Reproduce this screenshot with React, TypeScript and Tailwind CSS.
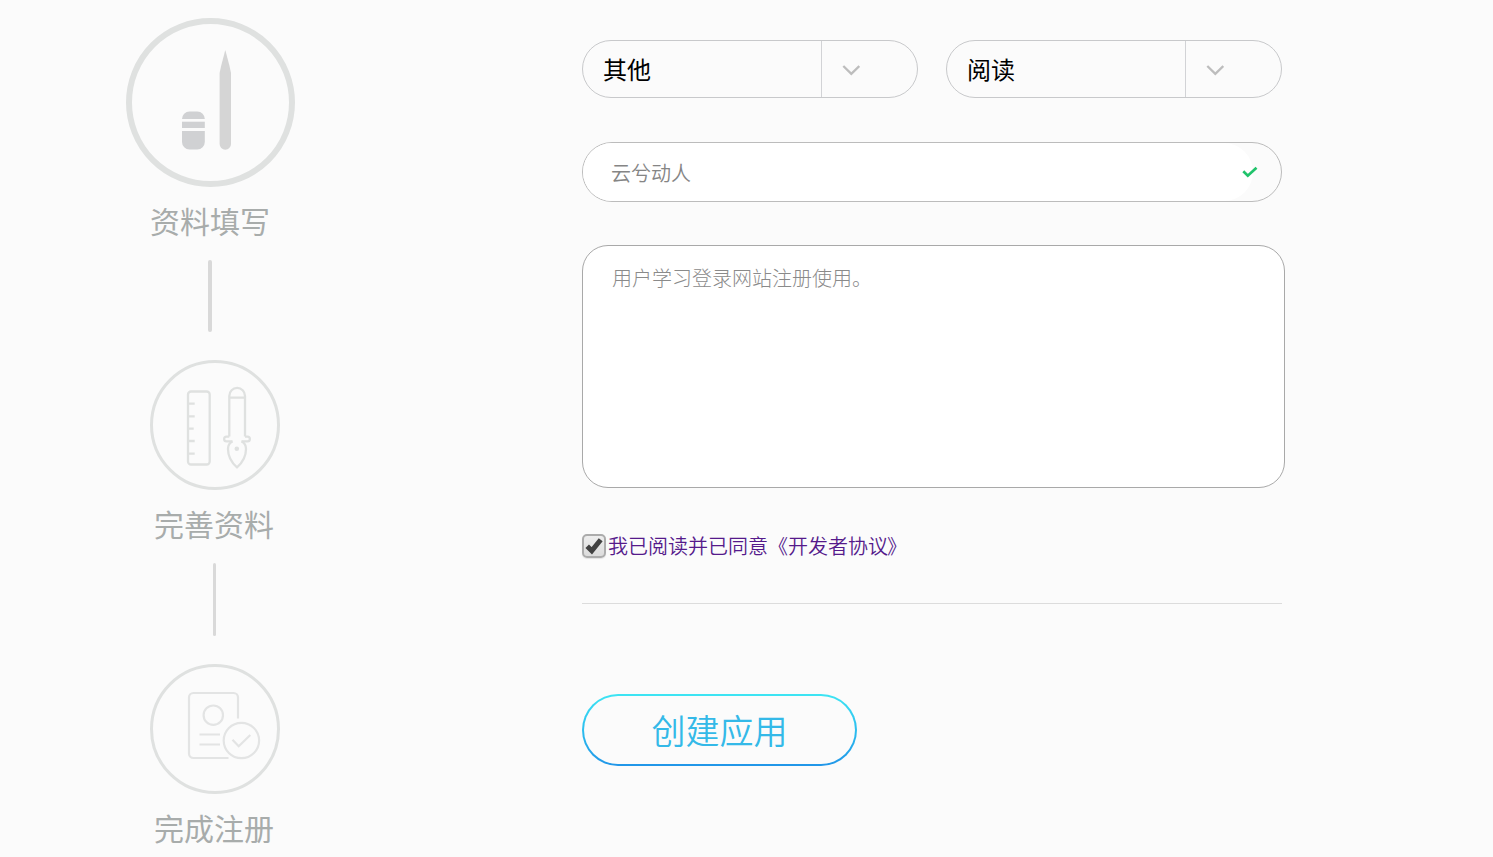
import React, { useState } from "react";

interface StepProps {
  label: string;
  className: string;
  labelClassName: string;
  children: React.ReactNode;
}

function Step({ label, className, labelClassName, children }: StepProps) {
  return (
    <div className={className}>
      {children}
      <div className={`h-10 text-[30px] leading-10 font-normal whitespace-nowrap text-[#a8acab] ${labelClassName}`}>{label}</div>
    </div>
  );
}

function PencilIcon() {
  return (
    <svg width="169" height="169" viewBox="0 0 169 169" fill="none">
      <circle cx="84.5" cy="84.5" r="81.5" stroke="#dfe1e0" strokeWidth="6" />
      <path d="M56 101V101a7.500 7.500 0 0 1 7.500-7.500h7.800a7.500 7.500 0 0 1 7.500 7.500v0z" fill="#d0d1d3" />
      <path d="M56 103.700h22.800v6.300H56z" fill="#d0d1d3" />
      <path d="M56 113h22.800v11a7.500 7.500 0 0 1-7.500 7.500H63.500a7.500 7.500 0 0 1-7.500-7.500z" fill="#d0d1d3" />
      <path d="M99.300 32L103.500 48L105 55V126a5.700 5.700 0 0 1-11.400 0V55L95.100 48z" fill="#d5d5d5" />
    </svg>
  );
}

function RulerPenIcon() {
  return (
    <svg width="130" height="130" viewBox="0 0 130 130" fill="none" stroke="#dfe1e0" strokeWidth="2.300">
      <circle cx="65" cy="65" r="63.500" strokeWidth="3" />
      <rect x="38" y="31.500" width="21.700" height="73" rx="3" />
      <path d="M38 43.700h6.700M38 56.300h6.700M38 68.700h5.700M38 81h6.700M38 93.700h6.700" />
      <path d="M79.300 76.500V36a7.800 8 0 0 1 15.700 0V76.500M79.300 37.700H95" />
      <path d="M79.300 76.700H76.500a2.300 2.300 0 0 0 0 4.700H82.500M95 76.700h2.500a2.300 2.300 0 0 1 0 4.700H91.500" />
      <path d="M82.500 81.500C79 83 78 86 78 89C78 96 82 103 87 107.300C92 103 96 96 96 89C96 86 95 83 91.500 81.500" />
      <circle cx="86.800" cy="88.700" r="2.300" fill="#dfe1e0" stroke="none" />
    </svg>
  );
}

function DoneIcon() {
  return (
    <svg width="130" height="130" viewBox="0 0 130 130" fill="none" stroke="#e3e4e4" strokeWidth="2.200">
      <circle cx="65" cy="65" r="63.500" stroke="#dfe1e0" strokeWidth="3" />
      <path d="M88 54.500V33.500a4.500 4.500 0 0 0-4.500-4.500H43.500a4.500 4.500 0 0 0-4.500 4.500V89.500a4.500 4.500 0 0 0 4.500 4.500H78.500" />
      <circle cx="63.300" cy="51.200" r="9.700" />
      <path d="M49.500 70.500H70M49.500 80.500H70" />
      <circle cx="91.400" cy="76.500" r="17.700" />
      <path d="M82.500 75.800L88.700 82.200L100.300 71" />
    </svg>
  );
}

function SelectBox({ value }: { value: string }) {
  return (
    <div className="flex h-[58px] w-[336px] rounded-full border border-[#c8c9cb]">
      <div className="flex w-[239px] items-center border-r border-[#d2d3d6] pl-5 text-2xl font-normal text-black">{value}</div>
      <div className="flex items-center pt-px pl-5">
        <svg width="18" height="12" viewBox="0 0 18 12" fill="none" stroke="#bdbdbd" strokeWidth="2.300">
          <path d="M1.300 2L9.300 9.800L17.300 2" />
        </svg>
      </div>
    </div>
  );
}

export default function App() {
  const [agreed, setAgreed] = useState(true);

  return (
    <div className="flex h-[857px] w-full overflow-hidden bg-[#fbfbfb] font-['Noto_Sans_CJK_SC',sans-serif] font-light">
      <aside className="w-[582px] shrink-0 pt-[18px]">
        <Step label="资料填写" className="ml-[126px]" labelClassName="mt-[13px] ml-6">
          <PencilIcon />
        </Step>
        <div className="mt-5 ml-[208px] h-[72px] w-1 rounded-full bg-[#d9d9d9]" />
        <Step label="完善资料" className="mt-7 ml-[150px]" labelClassName="mt-[13px] ml-1">
          <RulerPenIcon />
        </Step>
        <div className="mt-5 ml-[213px] h-[73px] w-[3px] rounded-full bg-[#d9d9d9]" />
        <Step label="完成注册" className="mt-7 ml-[150px]" labelClassName="mt-[13px] ml-1">
          <DoneIcon />
        </Step>
      </aside>

      <main className="w-[703px] pt-10">
        <div className="flex gap-7">
          <SelectBox value="其他" />
          <SelectBox value="阅读" />
        </div>

        <div className="mt-11 flex h-[60px] w-[700px] items-center rounded-full border border-[#bcbcbc]">
          <div className="flex h-full w-[670px] items-center rounded-full bg-white pt-0.5 pl-7 text-xl font-[350] text-[#858585]">云兮动人</div>
          <svg className="-ml-[11px]" width="16" height="12" viewBox="0 0 16 12" fill="none" stroke="#20c36b" strokeWidth="2.700">
            <path d="M1.300 5.300L5.800 9.700L14.500 1.700" />
          </svg>
        </div>

        <div className="mt-[43px] h-[243px] w-[703px] rounded-[26px] border border-[#a9a9a9] bg-white pt-[17px] pl-[29px] text-xl leading-[30px] text-[#8a8a8a]">
          用户学习登录网站注册使用。
        </div>

        <div className="mt-[43px] flex h-[30px] items-center">
          <button
            onClick={() => setAgreed(!agreed)}
            className="flex size-6 items-center justify-center rounded-[5px] border-2 border-[#acacac] bg-linear-to-b from-[#eeeeee] to-[#dcdcdc] shadow-[0_1px_1px_#e3e3e3]"
          >
            {agreed && (
              <svg className="shrink-0" width="18" height="18" viewBox="0 0 18 18" fill="none" stroke="#424242" strokeWidth="5">
                <path d="M2.200 9.200L6.800 13.800L15.700 2.800" />
              </svg>
            )}
          </button>
          <span className="ml-0.5 text-xl leading-[30px] font-[350] whitespace-nowrap text-[#551a8b]">
            我已阅读并已同意《开发者协议<span className="-ml-px">》</span>
          </span>
        </div>

        <hr className="mt-[42px] w-[700px] border-[#dcdcdc]" />

        <button className="mt-[90px] h-[72px] w-[275px] rounded-full bg-linear-to-b from-[#3ee5f3] to-[#2196e8] p-0.5">
          <span className="flex size-full items-center justify-center rounded-full bg-[#fbfbfb] pb-px text-[34px] font-[350] text-[#34b9e8]">创建应用</span>
        </button>
      </main>
    </div>
  );
}
